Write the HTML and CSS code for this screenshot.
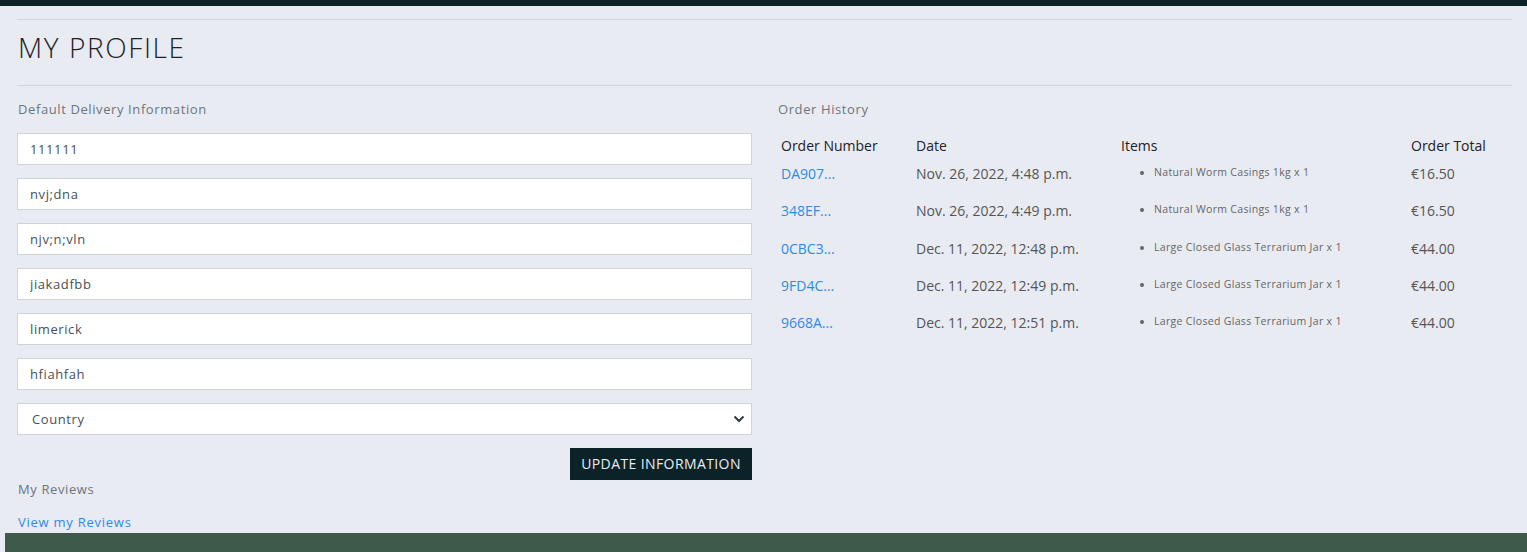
FILE: index.html
```html
<!DOCTYPE html>
<html lang="en">
<head>
<meta charset="utf-8">
<title>My Profile</title>
<link rel="stylesheet" href="styles.css">
</head>
<body>
<div class="topbar"></div>
<main class="container">
  <hr class="rule rule-top">
  <h1 class="page-title">MY PROFILE</h1>
  <hr class="rule rule-bottom">
  <div class="columns">
    <section class="col">
      <p class="muted label">Default Delivery Information</p>
      <form class="form">
        <input class="field" type="text" value="111111">
        <input class="field" type="text" value="nvj;dna">
        <input class="field" type="text" value="njv;n;vln">
        <input class="field" type="text" value="jiakadfbb">
        <input class="field" type="text" value="limerick">
        <input class="field" type="text" value="hfiahfah">
        <div class="select-wrap">
          <select class="field select">
            <option>Country</option>
          </select>
          <svg class="chevron" width="12" height="8" viewBox="0 0 12 8"><path d="M1.5 1.5 L6 6 L10.5 1.5" fill="none" stroke="#343a40" stroke-width="2"/></svg>
        </div>
        <div class="actions">
          <button class="btn" type="button">Update Information</button>
        </div>
      </form>
      <p class="muted label reviews-label">My Reviews</p>
      <a class="link reviews-link" href="#">View my Reviews</a>
    </section>
    <section class="col">
      <p class="muted label">Order History</p>
      <table class="orders">
        <thead>
          <tr>
            <th class="c1">Order Number</th>
            <th class="c2">Date</th>
            <th class="c3">Items</th>
            <th class="c4">Order Total</th>
          </tr>
        </thead>
        <tbody>
          <tr>
            <td><a class="link" href="#">DA907...</a></td>
            <td>Nov. 26, 2022, 4:48 p.m.</td>
            <td><ul class="items"><li>Natural Worm Casings 1kg x 1</li></ul></td>
            <td>€16.50</td>
          </tr>
          <tr>
            <td><a class="link" href="#">348EF...</a></td>
            <td>Nov. 26, 2022, 4:49 p.m.</td>
            <td><ul class="items"><li>Natural Worm Casings 1kg x 1</li></ul></td>
            <td>€16.50</td>
          </tr>
          <tr>
            <td><a class="link" href="#">0CBC3...</a></td>
            <td>Dec. 11, 2022, 12:48 p.m.</td>
            <td><ul class="items"><li>Large Closed Glass Terrarium Jar x 1</li></ul></td>
            <td>€44.00</td>
          </tr>
          <tr>
            <td><a class="link" href="#">9FD4C...</a></td>
            <td>Dec. 11, 2022, 12:49 p.m.</td>
            <td><ul class="items"><li>Large Closed Glass Terrarium Jar x 1</li></ul></td>
            <td>€44.00</td>
          </tr>
          <tr>
            <td><a class="link" href="#">9668A...</a></td>
            <td>Dec. 11, 2022, 12:51 p.m.</td>
            <td><ul class="items"><li>Large Closed Glass Terrarium Jar x 1</li></ul></td>
            <td>€44.00</td>
          </tr>
        </tbody>
      </table>
    </section>
  </div>
</main>
<footer class="footer"></footer>
</body>
</html>
```

FILE: styles.css
```css
* { box-sizing: border-box; }

html, body {
  margin: 0;
  padding: 0;
}

body {
  background: #e9ebf3;
  font-family: "Open Sans", "DejaVu Sans", sans-serif;
  color: #222;
  overflow: hidden;
}

.topbar {
  height: 6px;
  background: #0c2229;
}

.container {
  padding: 0 15px 0 17px;
}

.rule {
  border: 0;
  border-top: 1px solid #d2d5dc;
  margin: 0;
}

.rule-top { margin-top: 13px; }

.page-title {
  margin: 10px 0 0 1px;
  font-size: 28px;
  line-height: 34px;
  font-weight: 300;
  color: #222;
  letter-spacing: 1.6px;
}

.rule-bottom { margin-top: 21px; }

.columns {
  display: grid;
  grid-template-columns: 735px 735px;
  column-gap: 25px;
  margin-top: 13px;
}

.muted {
  color: #6c757d;
}

.label {
  margin: 0 0 0 1px;
  font-size: 13px;
  line-height: 20px;
  letter-spacing: 0.6px;
}

.form {
  display: flex;
  flex-direction: column;
  gap: 13px;
  margin-top: 14px;
}

.field {
  display: block;
  width: 100%;
  height: 32px;
  margin: 0;
  padding: 0 12px;
  border: 1px solid #ced4da;
  border-radius: 0;
  background: #fff;
  font-family: inherit;
  font-size: 13px;
  letter-spacing: 0.6px;
  color: #495057;
  outline: none;
}

.select-wrap {
  position: relative;
}

.select {
  appearance: none;
  -webkit-appearance: none;
  padding-left: 14px;
}

.chevron {
  position: absolute;
  right: 7px;
  top: 12px;
}

.actions {
  display: flex;
  justify-content: flex-end;
}

.btn {
  height: 32px;
  width: 182px;
  padding: 0 0 2px 0;
  border: 0;
  border-radius: 0;
  background: #0c2229;
  color: #e9ecef;
  font-family: inherit;
  font-size: 14px;
  letter-spacing: 0.4px;
  text-transform: uppercase;
}

.reviews-label {
  margin-top: -1px;
}

.link {
  color: #2f8ae4;
  text-decoration: none;
}

.reviews-link {
  display: block;
  margin: 13px 0 0 1px;
  font-size: 13px;
  line-height: 20px;
  letter-spacing: 0.75px;
}

.orders {
  width: 735px;
  margin-top: 14px;
  border-collapse: collapse;
  table-layout: fixed;
}

.orders .c1 { width: 135px; }
.orders .c2 { width: 205px; }
.orders .c3 { width: 290px; }
.orders .c4 { width: 105px; }

.orders th {
  text-align: left;
  font-weight: 400;
  font-size: 14px;
  line-height: 18px;
  color: #222;
  padding: 4px 4px 6px 4px;
  height: 28px;
}

.orders td {
  vertical-align: top;
  font-size: 14px;
  line-height: 18px;
  color: #555;
  padding: 4px 4px 0 4px;
  height: 37.25px;
}

.items {
  margin: 0;
  padding-left: 33px;
  list-style: disc;
}

.items li {
  font-size: 10.5px;
  line-height: 14px;
  letter-spacing: 0.32px;
  color: #666;
}

.footer {
  height: 40px;
  margin-left: 5px;
  margin-top: 1px;
  background: #3e5a4b;
}
```
